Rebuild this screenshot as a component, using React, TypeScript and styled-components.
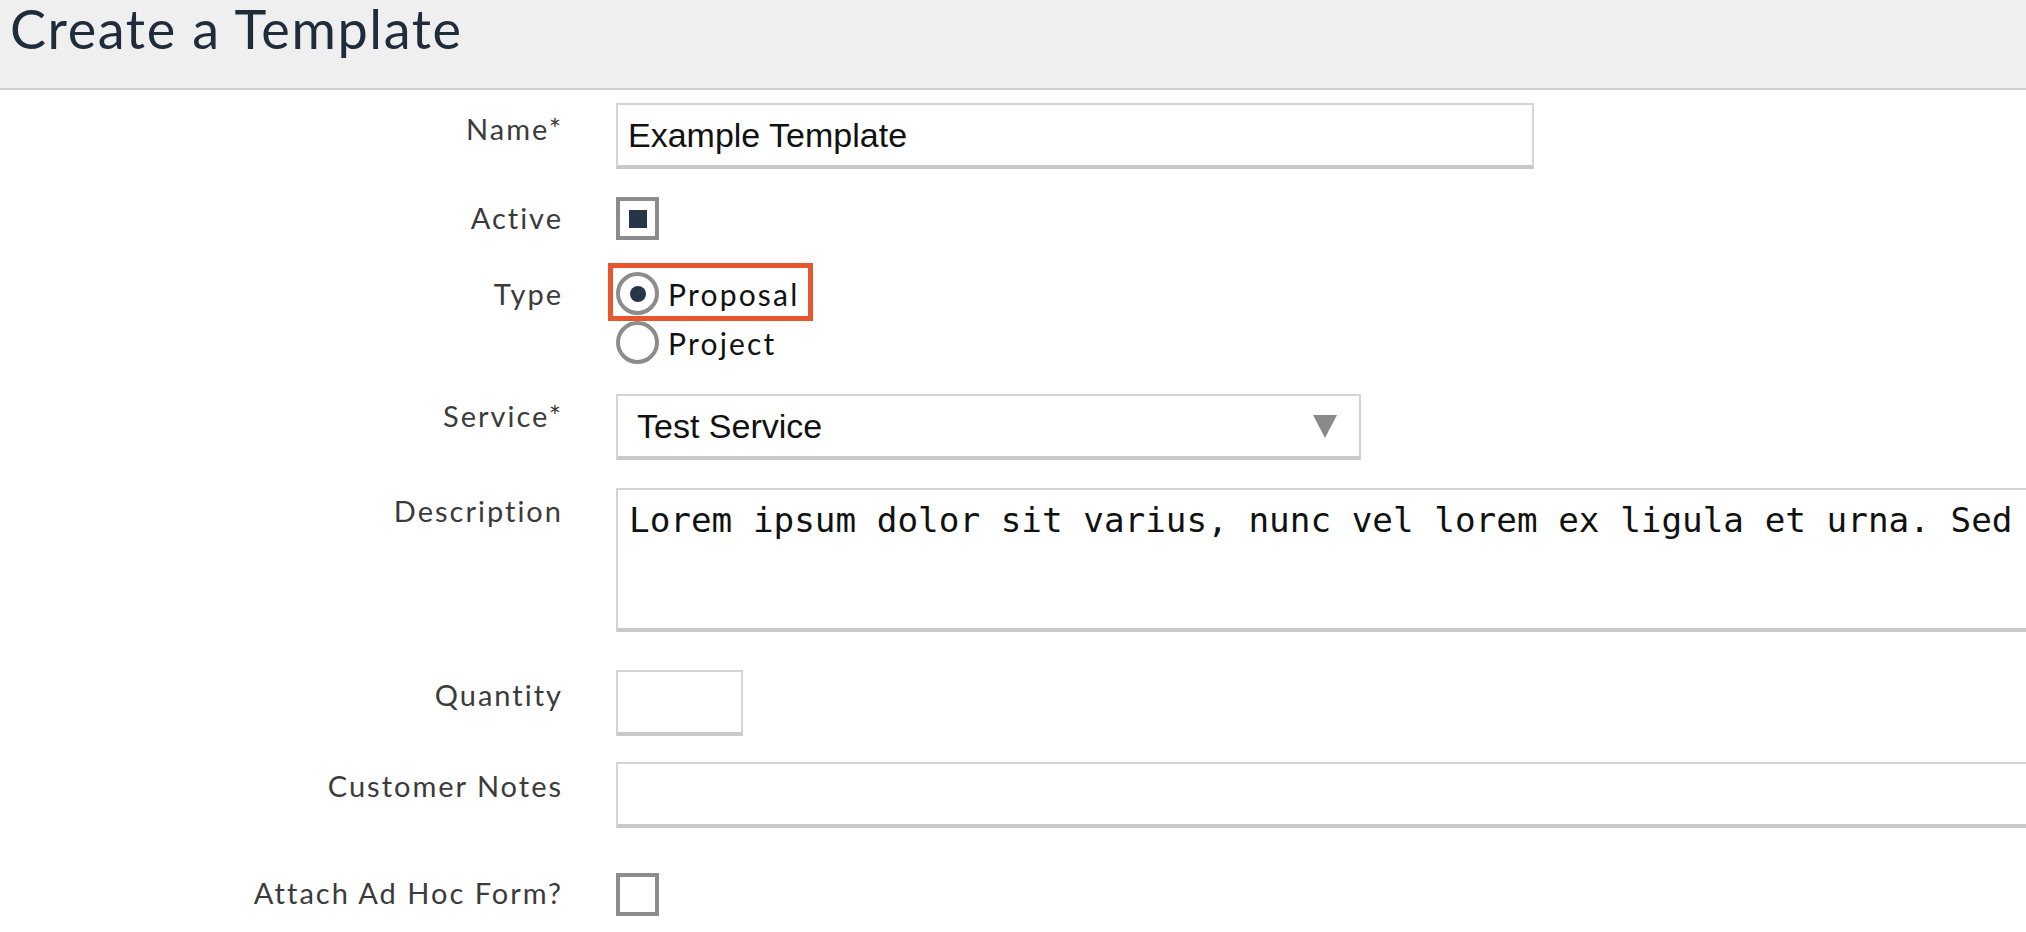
import React from 'react';
import styled, { createGlobalStyle } from 'styled-components';

const GlobalStyle = createGlobalStyle`
  html, body {
    margin: 0;
    padding: 0;
    background: #fff;
    overflow: hidden;
  }
  body {
    font-family: Lato, "Noto Sans", sans-serif;
  }
`;

const App = () => {
    return (
        <Page>
            <GlobalStyle />
            <Header>
                <Title>Create a Template</Title>
            </Header>
            <Form>
                <Row $space={13}>
                    <Label $pad={6}>Name*</Label>
                    <TextField $width={918}>Example Template</TextField>
                </Row>
                <Row $space={28}>
                    <Label $pad={1}>Active</Label>
                    <Checkbox $checked />
                </Row>
                <Row $space={23}>
                    <Label $pad={11}>Type</Label>
                    <RadioGroup>
                        <Highlight>
                            <Option>
                                <Radio $checked />
                                <OptionText>Proposal</OptionText>
                            </Option>
                        </Highlight>
                        <Option>
                            <Radio />
                            <OptionText>Project</OptionText>
                        </Option>
                    </RadioGroup>
                </Row>
                <Row $space={30}>
                    <Label $pad={2}>Service*</Label>
                    <Select>
                        <SelectText>Test Service</SelectText>
                        <svg width="24" height="24" viewBox="0 0 24 24">
                            <polygon points="0,1 24,1 12,24" fill="#8a8a8a" />
                        </svg>
                    </Select>
                </Row>
                <Row $space={28}>
                    <Label $pad={3}>Description</Label>
                    <TextArea>Lorem ipsum dolor sit varius, nunc vel lorem ex ligula et urna. Sed</TextArea>
                </Row>
                <Row $space={38}>
                    <Label $pad={5}>Quantity</Label>
                    <TextField $width={127} />
                </Row>
                <Row $space={26}>
                    <Label $pad={4}>Customer Notes</Label>
                    <TextField $width={1500} />
                </Row>
                <Row $space={45}>
                    <Label $pad={0}>Attach Ad Hoc Form?</Label>
                    <Checkbox />
                </Row>
            </Form>
        </Page>
    );
};

export default App;

// Styled Components
const Page = styled.div`
  width: 2026px;
  min-height: 932px;
`;

const Header = styled.header`
  height: 88px;
  background-color: #efefef;
  border-bottom: 2px solid #cfcfcf;
  padding-left: 10px;
`;

const Title = styled.h1`
  margin: 0;
  font-family: Lato, "Noto Sans", sans-serif;
  font-weight: 400;
  font-size: 54px;
  line-height: 58px;
  color: #1f2c3c;
  letter-spacing: 1.6px;
`;

const Form = styled.div`
  display: flex;
  flex-direction: column;
`;

const Row = styled.div<{ $space: number }>`
  display: flex;
  align-items: flex-start;
  margin-top: ${p => p.$space}px;
`;

const Label = styled.div<{ $pad: number }>`
  width: 563px;
  flex-shrink: 0;
  margin-right: 53px;
  padding-top: ${p => p.$pad}px;
  text-align: right;
  font-size: 29px;
  line-height: 40px;
  letter-spacing: 2px;
  color: #3b3b3b;
`;

const fieldBorder = `
  border: 2px solid #d4d4d4;
  border-bottom: 4px solid #c9c9c9;
  background: #fff;
  box-sizing: border-box;
`;

const TextField = styled.div<{ $width: number }>`
  ${fieldBorder}
  flex-shrink: 0;
  width: ${p => p.$width}px;
  height: 66px;
  padding: 0 10px;
  display: flex;
  align-items: center;
  font-family: "Liberation Sans", Arial, sans-serif;
  font-size: 34px;
  color: #111;
`;

const Select = styled.div`
  ${fieldBorder}
  width: 745px;
  height: 66px;
  padding: 0 22px 0 19px;
  display: flex;
  align-items: center;
  justify-content: space-between;
`;

const SelectText = styled.span`
  font-family: "Liberation Sans", Arial, sans-serif;
  font-size: 34px;
  color: #111;
`;

const TextArea = styled.div`
  ${fieldBorder}
  flex-shrink: 0;
  width: 1500px;
  height: 144px;
  padding: 8px 11px;
  white-space: nowrap;
  overflow: hidden;
  font-family: "DejaVu Sans Mono", "Liberation Mono", monospace;
  font-size: 34.3px;
  line-height: 44px;
  color: #111;
`;

const Checkbox = styled.div<{ $checked?: boolean }>`
  width: 43px;
  height: 43px;
  box-sizing: border-box;
  border: 4px solid #8c8c8c;
  background: #fff;
  display: flex;
  align-items: center;
  justify-content: center;

  &::after {
    content: '';
    display: ${p => (p.$checked ? 'block' : 'none')};
    width: 18px;
    height: 18px;
    background: #263548;
  }
`;

const RadioGroup = styled.div`
  display: flex;
  flex-direction: column;
  gap: 0;
`;

const Highlight = styled.div`
  align-self: flex-start;
  margin-left: -8px;
  padding: 4px 9px 1px 3px;
  border: 5px solid #e8562f;
`;

const Option = styled.div`
  display: flex;
  align-items: center;
  gap: 9px;
`;

const Radio = styled.div<{ $checked?: boolean }>`
  width: 43px;
  height: 43px;
  box-sizing: border-box;
  border: 4px solid #8c8c8c;
  border-radius: 50%;
  background: #fff;
  display: flex;
  align-items: center;
  justify-content: center;

  &::after {
    content: '';
    display: ${p => (p.$checked ? 'block' : 'none')};
    width: 16px;
    height: 16px;
    border-radius: 50%;
    background: #263548;
  }
`;

const OptionText = styled.span`
  font-size: 30px;
  letter-spacing: 2.2px;
  color: #111;
`;
